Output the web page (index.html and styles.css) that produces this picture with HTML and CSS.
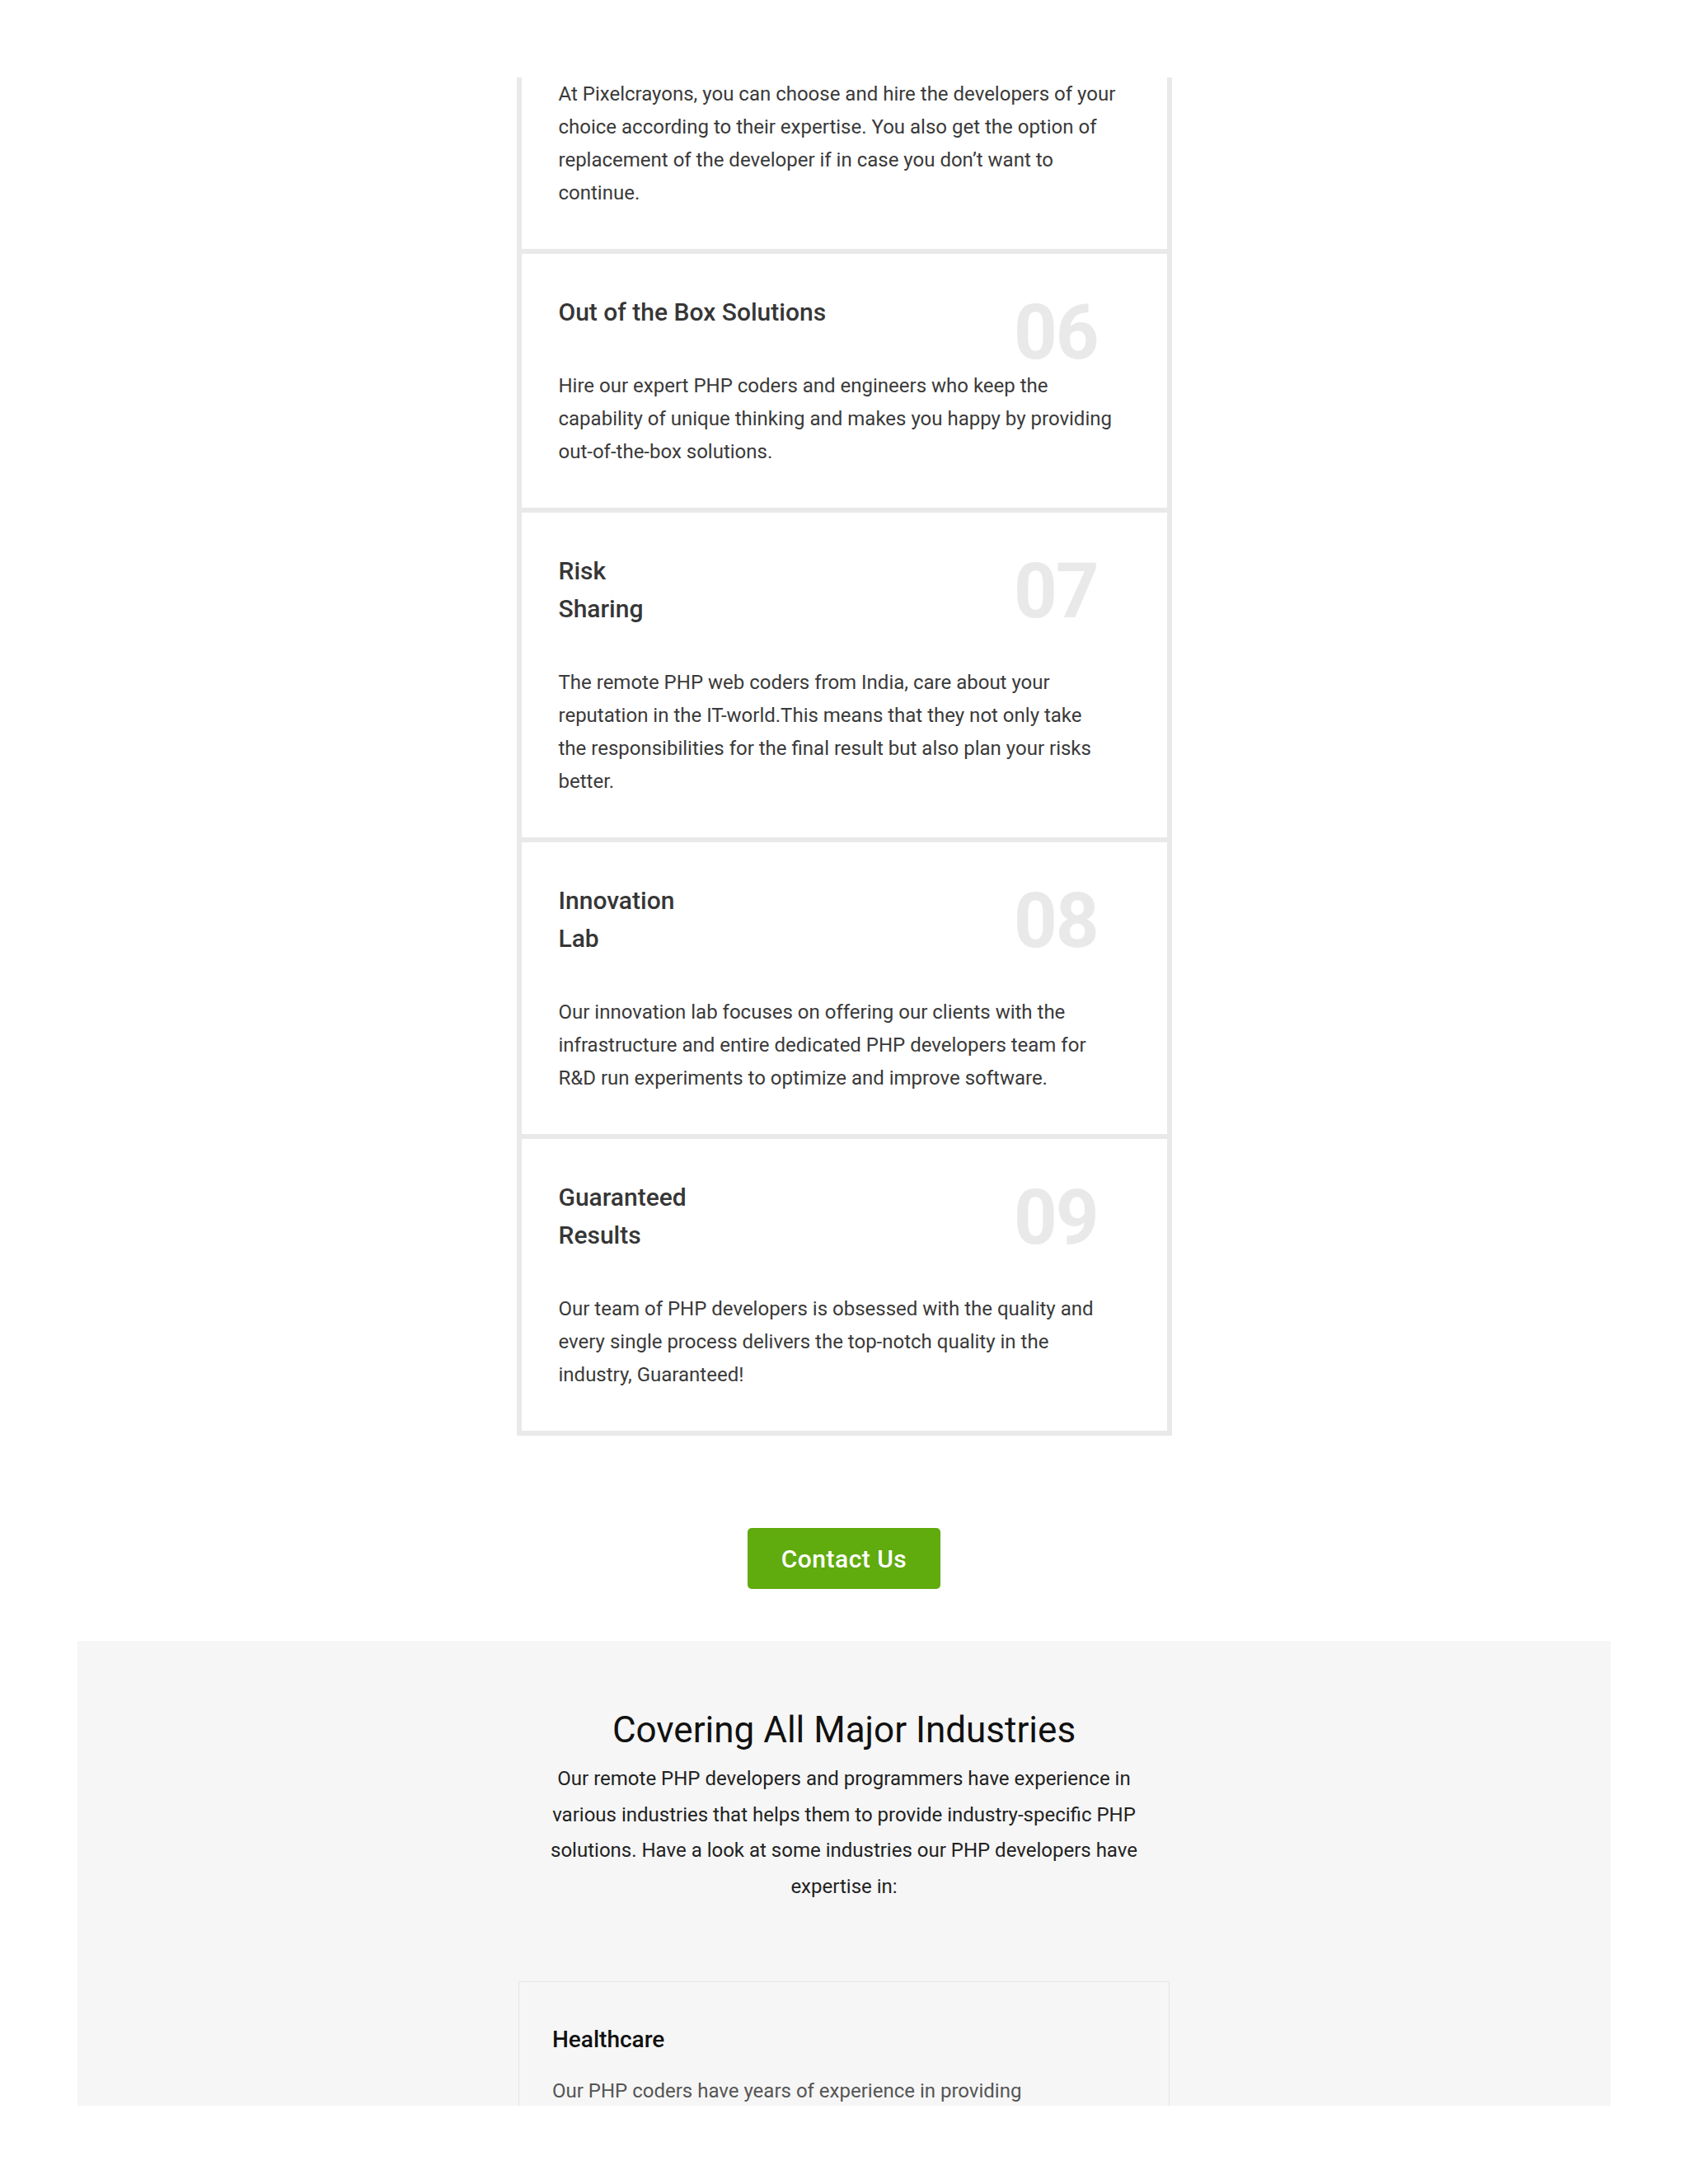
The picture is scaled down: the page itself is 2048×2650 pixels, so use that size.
FILE: index.html
```html
<!DOCTYPE html>
<html lang="en">
<head>
<meta charset="utf-8">
<title>Hire PHP Developers</title>
<link rel="stylesheet" href="styles.css">
</head>
<body>
<main class="page">
  <section class="features">
    <article class="feature feature--partial">
      <p class="feature__text">At Pixelcrayons, you can choose and hire the developers of your<br>choice according to their expertise. You also get the option of<br>replacement of the developer if in case you don’t want to<br>continue.</p>
    </article>
    <article class="feature">
      <h3 class="feature__title">Out of the Box Solutions</h3>
      <span class="feature__num">06</span>
      <p class="feature__text">Hire our expert PHP coders and engineers who keep the<br>capability of unique thinking and makes you happy by providing<br>out-of-the-box solutions.</p>
    </article>
    <article class="feature">
      <h3 class="feature__title">Risk<br>Sharing</h3>
      <span class="feature__num">07</span>
      <p class="feature__text">The remote PHP web coders from India, care about your<br>reputation in the IT-world.This means that they not only take<br>the responsibilities for the final result but also plan your risks<br>better.</p>
    </article>
    <article class="feature">
      <h3 class="feature__title">Innovation<br>Lab</h3>
      <span class="feature__num">08</span>
      <p class="feature__text">Our innovation lab focuses on offering our clients with the<br>infrastructure and entire dedicated PHP developers team for<br>R&amp;D run experiments to optimize and improve software.</p>
    </article>
    <article class="feature">
      <h3 class="feature__title">Guaranteed<br>Results</h3>
      <span class="feature__num">09</span>
      <p class="feature__text">Our team of PHP developers is obsessed with the quality and<br>every single process delivers the top-notch quality in the<br>industry, Guaranteed!</p>
    </article>
  </section>

  <div class="cta">
    <a class="btn" href="#">Contact Us</a>
  </div>

  <section class="industries">
    <h2 class="industries__title">Covering All Major Industries</h2>
    <p class="industries__intro">Our remote PHP developers and programmers have experience in various industries that helps them to provide industry-specific PHP solutions. Have a look at some industries our PHP developers have expertise in:</p>
    <div class="industry">
      <h3 class="industry__title">Healthcare</h3>
      <p class="industry__text">Our PHP coders have years of experience in providing</p>
    </div>
  </section>
</main>
</body>
</html>
```

FILE: styles.css
```css
* {
  box-sizing: border-box;
}

html,
body {
  margin: 0;
  padding: 0;
  background: #ffffff;
}

body {
  font-family: "Roboto", "Liberation Sans", sans-serif;
  color: #333333;
}

.page {
  padding-top: 94px;
}

/* Feature list */
.features {
  width: 795px;
  margin: 0 auto;
  border: 3px solid #e9e9e9;
  border-top: 0;
}

.feature {
  position: relative;
  border: 3px solid #e9e9e9;
  padding: 48px 50px 48px 45px;
  background: #ffffff;
}

.feature--partial {
  border-top: 0;
  padding-top: 0;
}

.feature__title {
  margin: 0 0 46px;
  font-size: 30px;
  line-height: 46px;
  font-weight: 500;
  color: #363636;
}

.feature__num {
  position: absolute;
  top: 50px;
  right: 84px;
  font-size: 92px;
  line-height: 1;
  font-weight: 700;
  letter-spacing: -2px;
  color: #e9e9e9;
}

.feature__text {
  margin: 0;
  font-size: 24px;
  line-height: 40px;
  color: #3a3a3a;
}

/* Call to action */
.cta {
  display: flex;
  justify-content: center;
  margin-top: 112px;
}

.btn {
  display: flex;
  align-items: center;
  justify-content: center;
  width: 234px;
  height: 74px;
  border-radius: 5px;
  background: #60ab0e;
  color: #ffffff;
  font-size: 30px;
  font-weight: 500;
  letter-spacing: 0.5px;
  text-decoration: none;
}

/* Industries */
.industries {
  height: 564px;
  margin: 63px 94px 0;
  padding-top: 81px;
  overflow: hidden;
  background: #f6f6f6;
  text-align: center;
}

.industries__title {
  margin: 0;
  font-size: 44px;
  line-height: 54px;
  font-weight: 400;
  color: #111111;
}

.industries__intro {
  max-width: 750px;
  margin: 11px auto 0;
  font-size: 24px;
  line-height: 43.6px;
  color: #222222;
}

.industry {
  width: 790px;
  margin: 93px auto 0;
  padding: 50px 40px;
  border: 1px solid #e6e6e6;
  text-align: left;
}

.industry__title {
  margin: 0;
  font-size: 28px;
  line-height: 40px;
  font-weight: 500;
  color: #111111;
}

.industry__text {
  margin: 22px 0 0;
  font-size: 24px;
  line-height: 40px;
  color: #555555;
}
```
